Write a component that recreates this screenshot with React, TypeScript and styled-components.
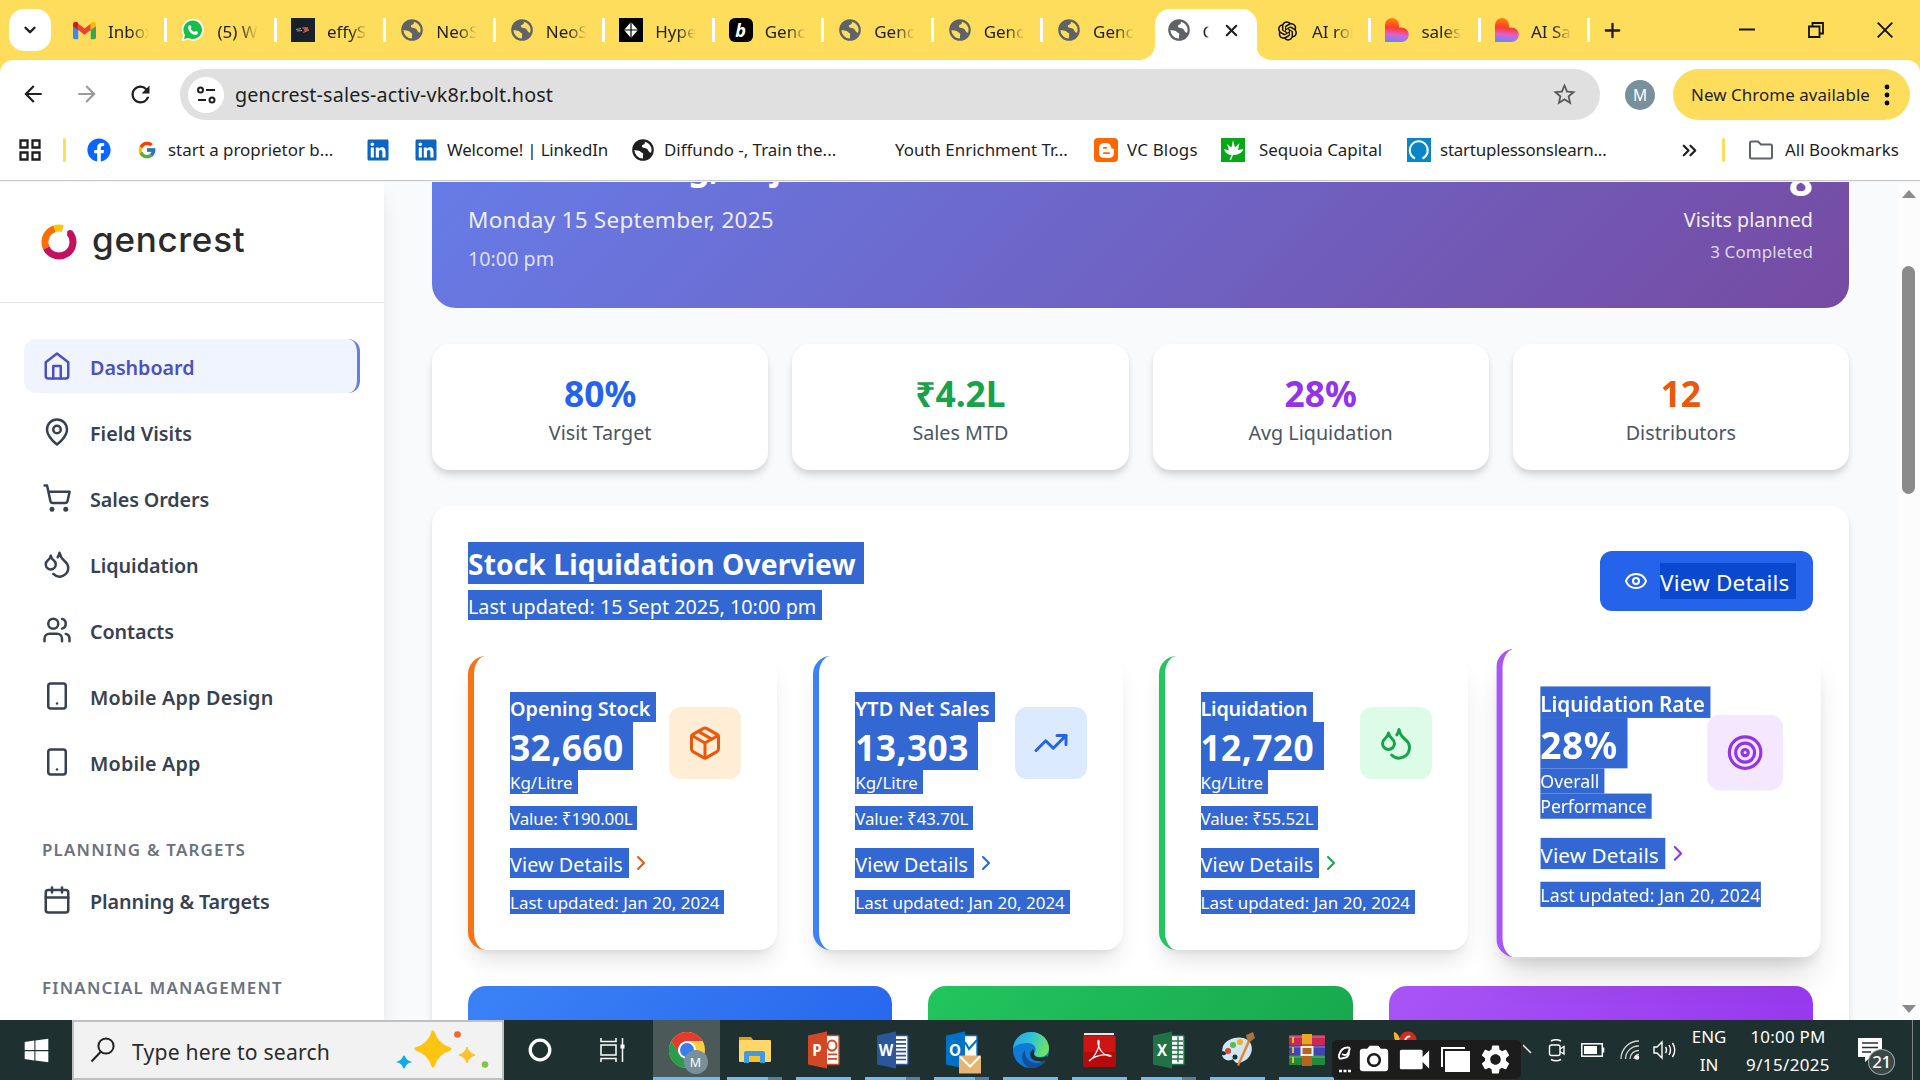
import React from "react";
import styled, { createGlobalStyle, css } from "styled-components";
import {
  Calendar, ChevronDown, ChevronRight, ChevronsRight, Droplets, Eye, Package,
  ShoppingCart, Smartphone, Target, TrendingUp, Users, Plus, X,
} from "lucide-react";
import { FaBloggerB, FaFacebook, FaLinkedin, FaWindows } from "react-icons/fa";
import { FcGoogle } from "react-icons/fc";
import { AiOutlineOpenAI } from "react-icons/ai";
import { MdArrowBack, MdArrowForward, MdPhotoCamera, MdRefresh, MdSettings, MdStarBorder, MdVideocam } from "react-icons/md";

const GlobalStyle = createGlobalStyle`
  * { box-sizing: border-box; }
  body { margin: 0; background: #fff; overflow: hidden; }
  svg { display: block; flex: none; }
`;

const FONT = `"Noto Sans", "Open Sans", sans-serif`;
const YELLOW = "#ffdd5c";

const Screen = styled.div`
  width: 1920px;
  height: 1080px;
  display: flex;
  flex-direction: column;
  overflow: hidden;
  font-family: ${FONT};
  color: #1f1f1f;
`;

/* ---------- Text ---------- */

type TextProps = { $s: number; $lh: number; $w?: number; $c?: string; $ls?: number; $hl?: string; $gap?: number; $drop?: number };

const Text = styled.div<TextProps>`
  width: fit-content;
  height: ${(p) => p.$lh}px;
  line-height: ${(p) => p.$lh + (p.$drop ?? (p.$s >= 21 && p.$s <= 24 ? 2 : p.$s * 0.05)) * 2}px;
  font-size: ${(p) => p.$s * 0.94}px;
  font-weight: ${(p) => p.$w ?? 400};
  letter-spacing: ${(p) => p.$ls ?? 0}px;
  color: ${(p) => p.$c ?? "inherit"};
  white-space: nowrap;
  ${(p) =>
    p.$hl &&
    css`
      background: ${p.$hl};
      color: #fff;
      padding-right: ${p.$gap ?? p.$s * 0.274}px;
    `}
`;

/* ---------- Tab strip ---------- */

const TabStrip = styled.div`
  height: 60px;
  flex: none;
  display: flex;
  align-items: center;
  background: ${YELLOW};
`;

const TabSearch = styled.div`
  width: 42px;
  height: 42px;
  margin: 0 4px 0 9px;
  border-radius: 15px;
  background: #fff;
  display: flex;
  align-items: center;
  justify-content: center;
`;

const TabBox = styled.div<{ $active?: boolean; $line?: boolean }>`
  position: relative;
  width: 109.46px;
  height: 60px;
  flex: none;
  display: flex;
  align-items: center;
  padding-left: 17px;
  ${(p) =>
    p.$line &&
    css`
      &::after {
        content: "";
        position: absolute;
        right: -3px;
        top: 18px;
        width: 3px;
        height: 24px;
        background: #fff;
      }
    `}
  ${(p) =>
    p.$active &&
    css`
      &::before {
        content: "";
        position: absolute;
        left: 5px;
        top: 9px;
        width: 102px;
        height: 51px;
        background: #fff;
        border-radius: 15px 15px 0 0;
      }
    `}
`;

const Flare = styled.span<{ $side: "left" | "right" }>`
  position: absolute;
  bottom: 0;
  ${(p) => (p.$side === "left" ? "left: -10px;" : "right: -12px;")}
  width: 15px;
  height: 15px;
  background: radial-gradient(circle at ${(p) => (p.$side === "left" ? "0 0" : "100% 0")}, transparent 14.5px, #fff 15px);
`;

const TabIcon = styled.span`
  position: relative;
  width: 24px;
  height: 24px;
  display: flex;
  align-items: center;
  justify-content: center;
`;

const TabTitle = styled.span<{ $w?: number }>`
  position: relative;
  top: 2px;
  width: ${(p) => p.$w ?? 41}px;
  margin-left: 12px;
  overflow: hidden;
  white-space: nowrap;
  font-size: 17px;
  line-height: 26px;
  mask-image: linear-gradient(90deg, #000 55%, transparent 100%);
`;

const TabClose = styled.span`
  position: relative;
  margin-left: 13px;
`;

const WindowButtons = styled.div`
  display: flex;
  align-items: center;
  gap: 53px;
  margin-left: auto;
  padding-right: 27px;
`;

const NewTab = styled.div`
  margin-left: 14px;
`;

const Favicon = styled.span<{ $bg: string; $r?: number }>`
  width: 24px;
  height: 24px;
  border-radius: ${(p) => p.$r ?? 0}px;
  background: ${(p) => p.$bg};
  display: flex;
  align-items: center;
  justify-content: center;
  color: #fff;
  font-size: 18px;
  line-height: 1;
`;

const BoldItalic = styled.b`
  font-style: italic;
  font-size: 18px;
  line-height: 22px;
`;

const Globe = ({ color = "#5f6368", size = 22 }: { color?: string; size?: number }) => (
  <svg width={size} height={size} viewBox="0 0 22 22">
    <circle cx="11" cy="11" r="9.7" fill="none" stroke={color} strokeWidth="2.2" />
    <path d="M2 11C1.500 5 6 1.500 12.500 1.700 L13 4 Q12.500 5.500 10.500 6 Q9.500 6.500 10 8 Q11 9 13 9 Q16 9.300 16.500 12 Q17 13.500 19.500 14 L17 18 Q14 20.500 11 20 L11 16.500 Q12 14.500 9.500 13.500 Q8 11.500 5.500 11.500 Z" fill={color} />
  </svg>
);

const Gmail = () => (
  <svg width="23" height="19" viewBox="0 0 24 19">
    <path d="M0 3 V17 Q0 18.500 1.600 18.500 H5.500 V8 Z" fill="#4285f4" />
    <path d="M24 3 V17 Q24 18.500 22.400 18.500 H18.500 V8 Z" fill="#34a853" />
    <path d="M5.500 2.500 L12 7.500 L18.500 2.500 V9 L12 14 L5.500 9 Z" fill="#ea4335" />
    <path d="M0 3 C0 0.200 3 -0.700 5.500 1.500 V9 L0 5 Z" fill="#c5221f" />
    <path d="M24 3 C24 0.200 21 -0.700 18.500 1.500 V9 L24 5 Z" fill="#fbbc04" />
  </svg>
);

const Heart = ({ id }: { id: string }) => (
  <svg width="24" height="24" viewBox="0 0 24 24">
    <defs>
      <linearGradient id={id} x1="0.5" y1="0" x2="0.4" y2="1">
        <stop offset="0" stopColor="#ff8a00" />
        <stop offset="0.42" stopColor="#ff3d2e" />
        <stop offset="0.7" stopColor="#e060d0" />
        <stop offset="1" stopColor="#5b8cff" />
      </linearGradient>
    </defs>
    <path d="M0 7 A7 7 0 0 1 14 7 V9.500 H16.500 A7.200 7.200 0 0 1 16.500 24 H0 Z" fill={`url(#${id})`} />
  </svg>
);

const Effy = () => (
  <svg width="24" height="24" viewBox="0 0 24 24">
    <rect width="24" height="24" fill="#17202b" />
    <path d="M5 11.500 L10 10.500 M6 13 L11 12.500" stroke="#a89b95" strokeWidth="1.200" />
    <path d="M11.500 10 H17 L13 12 H18 L12 14.500" stroke="#c9603a" strokeWidth="1.300" fill="none" />
  </svg>
);

const Hyper = () => (
  <svg width="24" height="24" viewBox="0 0 24 24">
    <rect width="24" height="24" fill="#000" />
    <path d="M12 4 L19 12 L12 20 L5 12 Z" fill="#fff" />
    <path d="M5 12 H19 M12 4 V20" stroke="#000" strokeWidth="1.200" />
  </svg>
);

const WhatsApp = () => (
  <svg width="24" height="24" viewBox="0 0 24 24">
    <path d="M1 23 L2.500 17.500 A11 11 0 1 1 7 21.600 Z" fill="#fff" />
    <path d="M3 21 L4 17 A9.300 9.300 0 1 1 7.300 20 Z" fill="#12c04b" />
    <path d="M8 7.200 Q9 6.500 9.700 7.500 L10.500 9.300 L9.700 10.700 Q11 13 13.600 14 L14.800 12.900 L17 14 Q17 16.800 14.300 17 Q8.500 16 7 10 Q7 8.200 8 7.200Z" fill="#fff" />
  </svg>
);

type TabDef = { title: string; icon: React.ReactNode };
const tabs: TabDef[] = [
  { title: "Inbox", icon: <Gmail /> },
  { title: "(5) W", icon: <WhatsApp /> },
  { title: "effyS", icon: <Effy /> },
  { title: "NeoS", icon: <Globe /> },
  { title: "NeoS", icon: <Globe /> },
  { title: "Hype", icon: <Hyper /> },
  { title: "Genc", icon: <Favicon $bg="#000" $r={6}><BoldItalic>b</BoldItalic></Favicon> },
  { title: "Genc", icon: <Globe /> },
  { title: "Genc", icon: <Globe /> },
  { title: "Genc", icon: <Globe /> },
];
const tabsAfter: TabDef[] = [
  { title: "AI rol", icon: <AiOutlineOpenAI size={25} color="#111" /> },
  { title: "sales", icon: <Heart id="heart-a" /> },
  { title: "AI Sa", icon: <Heart id="heart-b" /> },
];

/* ---------- Toolbar ---------- */

const ToolbarWrap = styled.div`
  flex: none;
  background: ${YELLOW};
`;

const Toolbar = styled.div`
  height: 69px;
  display: flex;
  align-items: center;
  background: #fff;
  border-radius: 13px 13px 0 0;
  padding-left: 20px;
`;

const NavButtons = styled.div`
  width: 160px;
  display: flex;
  gap: 27.5px;
`;

const UrlBar = styled.div`
  width: 1420px;
  height: 51px;
  border-radius: 26px;
  background: #e0e0e0;
  display: flex;
  align-items: center;
  padding: 0 22px 0 8px;
  justify-content: space-between;
`;

const UrlLeft = styled.div`
  display: flex;
  align-items: center;
  gap: 11px;
`;

const SiteInfo = styled.span`
  width: 36px;
  height: 36px;
  border-radius: 50%;
  background: #fff;
  display: flex;
  align-items: center;
  justify-content: center;
`;

const Avatar = styled.div<{ $size: number }>`
  width: ${(p) => p.$size}px;
  height: ${(p) => p.$size}px;
  border-radius: 50%;
  background: #78909c;
  color: #fff;
  font-size: ${(p) => p.$size * 0.52}px;
  display: flex;
  align-items: center;
  justify-content: center;
`;

const Profile = styled.div`
  margin-left: 25px;
`;

const UpdateChip = styled.div`
  width: 237px;
  height: 51px;
  margin-left: 18px;
  padding-left: 18px;
  border-radius: 26px;
  background: ${YELLOW};
  display: flex;
  align-items: center;
  gap: 14px;
`;

/* ---------- Bookmarks ---------- */

const Bookmarks = styled.div`
  height: 51px;
  display: flex;
  align-items: center;
  background: #fff;
  padding: 0 0 9px 19px;
`;

const Bookmark = styled.div<{ $w: number; $gap?: number; $ls?: number }>`
  width: ${(p) => p.$w}px;
  flex: none;
  display: flex;
  align-items: center;
  gap: ${(p) => p.$gap ?? 10}px;
  font-size: 16.92px;
  line-height: 24px;
  letter-spacing: ${(p) => p.$ls ?? 0}px;
  white-space: nowrap;
`;

const BarDivider = styled.span<{ $mr: number }>`
  width: 3px;
  height: 24px;
  border-radius: 2px;
  background: ${YELLOW};
  margin-right: ${(p) => p.$mr}px;
`;

const ChromeEdge = styled.div`
  height: 2px;
  flex: none;
  border-top: 1px solid #c8c8c8;
  background: #f3f4f7;
`;

/* ---------- Page ---------- */

const Page = styled.div`
  height: 838px;
  flex: none;
  display: flex;
  overflow: hidden;
  background: #f9fafc;
`;

const Sidebar = styled.aside`
  width: 384px;
  flex: none;
  background: #fff;
  box-shadow: 0 15px 23px -4px rgba(0, 0, 0, 0.1), 0 6px 9px -3px rgba(0, 0, 0, 0.06);
`;

const Brand = styled.div`
  height: 121px;
  padding-left: 41px;
  display: flex;
  align-items: center;
  gap: 15px;
  border-bottom: 1px solid #e5e7eb;
`;

const BrandName = styled.span`
  font-family: Inter, sans-serif;
  font-weight: 500;
  font-size: 35px;
  letter-spacing: 0.7px;
  line-height: 40px;
  padding-bottom: 7px;
  color: #2b2b2b;
`;

const Nav = styled.nav`
  padding: 36px 24px 0;
`;

const NavItem = styled.div<{ $active?: boolean }>`
  height: 54px;
  margin-bottom: 12px;
  padding: 0 0 0 18px;
  display: flex;
  align-items: center;
  gap: 18px;
  border-radius: 12px;
  color: ${(p) => (p.$active ? "#4c51bf" : "#374151")};
  ${(p) => p.$active && "background: #f0f4ff; border-right: 3px solid #667eea;"}
`;

const NavHeading = styled.div`
  margin: 48px 0 12px 18px;
`;

const Main = styled.main`
  width: 1513px;
  flex: none;
  padding: 0 48px;
`;

/* Scroll offset of the content column inside the viewport. */
const Scrolled = styled.div`
  margin-top: -78px;
  display: flex;
  flex-direction: column;
  gap: 36px;
`;

const Hero = styled.section`
  height: 204px;
  padding: 36px;
  border-radius: 24px;
  display: flex;
  justify-content: space-between;
  background: linear-gradient(135deg, #667eea 0%, #764ba2 100%);
  color: #fff;
`;

const HeroCol = styled.div<{ $right?: boolean }>`
  display: flex;
  flex-direction: column;
  justify-content: ${(p) => (p.$right ? "center" : "flex-start")};
  align-items: ${(p) => (p.$right ? "flex-end" : "flex-start")};
`;

const Gap = styled.div<{ $h: number }>`
  height: ${(p) => p.$h}px;
`;

const Stats = styled.section`
  display: grid;
  grid-template-columns: repeat(4, 1fr);
  gap: 24px;
`;

const Stat = styled.div`
  height: 126px;
  padding: 24px;
  border-radius: 18px;
  background: #fff;
  box-shadow: 0 6px 9px -1.5px rgba(0, 0, 0, 0.12), 0 3px 6px -1.5px rgba(0, 0, 0, 0.07);
  display: flex;
  flex-direction: column;
  align-items: center;
`;

const Panel = styled.section`
  border-radius: 18px;
  background: #fff;
  padding: 36px;
  box-shadow: 0 6px 9px -1.5px rgba(0, 0, 0, 0.1), 0 3px 6px -1.5px rgba(0, 0, 0, 0.06);
`;

const PanelHead = styled.div`
  height: 78px;
  display: flex;
  align-items: center;
  justify-content: space-between;
  margin-bottom: 36px;
`;

const DetailsButton = styled.div`
  width: 213px;
  height: 60px;
  border-radius: 12px;
  background: #2563eb;
  padding-left: 24px;
  display: flex;
  align-items: center;
  gap: 12px;
  color: #fff;
`;

const Cards = styled.div`
  display: grid;
  grid-template-columns: repeat(4, 1fr);
  gap: 36px;
  margin-bottom: 36px;
`;

const Card = styled.article<{ $edge: string; $raised?: boolean }>`
  height: 294px;
  padding: 36px;
  border-left: 6px solid ${(p) => p.$edge};
  border-radius: 18px;
  background: #fff;
  box-shadow: ${(p) =>
    p.$raised
      ? "0 22px 32px -8px rgba(0,0,0,0.15), 0 9px 14px -6px rgba(0,0,0,0.12)"
      : "0 15px 22px -4px rgba(0,0,0,0.1), 0 6px 9px -6px rgba(0,0,0,0.12)"};
  ${(p) => p.$raised && "transform: scale(1.05);"}
`;

const CardTop = styled.div`
  display: flex;
  align-items: center;
  justify-content: space-between;
`;

const CardFigures = styled.div`
  width: 150px;
`;

const Tile = styled.div<{ $bg: string; $c: string }>`
  width: 72px;
  height: 72px;
  flex: none;
  border-radius: 12px;
  background: ${(p) => p.$bg};
  color: ${(p) => p.$c};
  display: flex;
  align-items: center;
  justify-content: center;
`;

const LinkRow = styled.div<{ $c: string }>`
  margin: 18px 0 12px;
  display: flex;
  align-items: center;
  color: ${(p) => p.$c};
`;

const Banners = styled.div`
  display: grid;
  grid-template-columns: repeat(3, 1fr);
  gap: 36px;
`;

const Banner = styled.div<{ $from: string; $to: string }>`
  height: 120px;
  border-radius: 18px;
  background: linear-gradient(135deg, ${(p) => p.$from}, ${(p) => p.$to});
`;

const Scrollbar = styled.div`
  width: 23px;
  flex: none;
  background: #fcfcfc;
  display: flex;
  flex-direction: column;
  align-items: center;
  padding: 8px 0 7px;
`;

const Arrow = styled.span<{ $up?: boolean }>`
  border: 7px solid transparent;
  ${(p) => (p.$up ? "border-top: 0; border-bottom: 8px solid #8b8b8b;" : "border-bottom: 0; border-top: 8px solid #8b8b8b; margin-top: auto;")}
`;

const Thumb = styled.span`
  width: 13px;
  height: 228px;
  margin-top: 68px;
  border-radius: 7px;
  background: #8b8b8b;
`;

const HomeIcon = () => (
  <svg width="30" height="30" viewBox="0 0 24 24" fill="none" stroke="currentColor" strokeWidth="2" strokeLinecap="round" strokeLinejoin="round">
    <path d="m3 9 9-7 9 7v11a2 2 0 0 1-2 2H5a2 2 0 0 1-2-2z" />
    <polyline points="9 22 9 12 15 12 15 22" />
  </svg>
);

const PinIcon = () => (
  <svg width="30" height="30" viewBox="0 0 24 24" fill="none" stroke="currentColor" strokeWidth="2" strokeLinecap="round" strokeLinejoin="round">
    <path d="M20 10c0 6-8 12-8 12s-8-6-8-12a8 8 0 0 1 16 0Z" />
    <circle cx="12" cy="10" r="3" />
  </svg>
);

const Ring = () => (
  <svg width="36" height="36" viewBox="-18 -18 36 36" fill="none" strokeWidth="7">
    <path d="M-12.700 5.900 A14 14 0 0 1 -4.400 -13.300" stroke="#ff6d00" />
    <path d="M-4.400 -13.300 A14 14 0 0 1 3.800 -13.500" stroke="#ffc400" />
    <path d="M10.300 -9.500 A14 14 0 1 1 -12.700 5.900" stroke="#c4105f" />
    <circle cx="10.900" cy="-9.300" r="2.800" fill="#c4105f" />
  </svg>
);

const HL = "#3367d1";

const navItems = [
  { label: "Dashboard", icon: <HomeIcon />, ls: -0.05 },
  { label: "Field Visits", icon: <PinIcon />, ls: 0 },
  { label: "Sales Orders", icon: <ShoppingCart size={30} />, ls: -0.1 },
  { label: "Liquidation", icon: <Droplets size={30} />, ls: -0.05 },
  { label: "Contacts", icon: <Users size={30} />, ls: -0.1 },
  { label: "Mobile App Design", icon: <Smartphone size={30} />, ls: 0.2 },
  { label: "Mobile App", icon: <Smartphone size={30} />, ls: 0.2 },
];

const stats = [
  { value: "80%", label: "Visit Target", color: "#2563eb" },
  { value: "₹4.2L", label: "Sales MTD", color: "#16a34a" },
  { value: "28%", label: "Avg Liquidation", color: "#9333ea" },
  { value: "12", label: "Distributors", color: "#ea580c" },
];

const cards = [
  { title: "Opening Stock", value: "32,660", money: "Value: ₹190.00L", edge: "#f97316", bg: "#ffedd5", c: "#ea580c", icon: <Package size={36} /> },
  { title: "YTD Net Sales", value: "13,303", money: "Value: ₹43.70L", edge: "#3b82f6", bg: "#dbeafe", c: "#2563eb", icon: <TrendingUp size={36} />, ls: 0.16 },
  { title: "Liquidation", value: "12,720", money: "Value: ₹55.52L", edge: "#22c55e", bg: "#dcfce7", c: "#16a34a", icon: <Droplets size={36} />, ls: -0.2 },
  { title: "Liquidation Rate", value: "28%", edge: "#a855f7", bg: "#f3e8ff", c: "#9333ea", icon: <Target size={36} />, ls: -0.1 },
];

/* ---------- Taskbar ---------- */

const Taskbar = styled.footer`
  position: relative;
  height: 60px;
  flex: none;
  display: flex;
  background: #1e3130;
  color: #fff;
`;

const Slot = styled.div<{ $w: number }>`
  width: ${(p) => p.$w}px;
  height: 60px;
  flex: none;
  display: flex;
  align-items: center;
  justify-content: center;
`;

const Search = styled.div`
  width: 432px;
  height: 60px;
  border: 2px solid #c0c0c0;
  background: #f2f2f2;
  display: flex;
  align-items: center;
  gap: 16px;
  padding-left: 16px;
  color: #2b2b2b;
`;

const SearchArt = styled.div`
  margin-left: auto;
  padding-right: 12px;
`;

const TaskApp = styled.div<{ $active?: boolean; $multi?: boolean }>`
  width: ${(p) => (p.$active ? 67 : 69)}px;
  margin-left: ${(p) => (p.$active ? 5 : 0)}px;
  height: 60px;
  flex: none;
  display: flex;
  flex-direction: column;
  align-items: center;
  justify-content: space-between;
  background: ${(p) => (p.$active ? "#4b5a59" : "transparent")};
  padding-top: 7px;
  &::after {
    content: "";
    width: ${(p) => (p.$active ? 67 : 55)}px;
    height: 3px;
    background: ${(p) => (p.$multi ? "linear-gradient(90deg, #76b9ed 41px, #55819f 41px)" : "#76b9ed")};
  }
`;

const AppIcon = styled.div`
  position: relative;
  height: 46px;
  display: flex;
  align-items: center;
  justify-content: center;
`;

const AppBadge = styled.div`
  position: absolute;
  right: -3px;
  bottom: -1px;
`;

const OfficeText = styled.text`
  font-family: "Open Sans", sans-serif;
  font-weight: 700;
  fill: #fff;
`;

const Office = ({ letter, color, children }: { letter: string; color: string; children: React.ReactNode }) => (
  <svg width="32" height="38" viewBox="0 0 32 34" preserveAspectRatio="none">
    <rect x="14" y="4" width="17" height="26" rx="1" fill="#fff" stroke={color} strokeWidth="1.400" />
    {children}
    <path d="M0 4 L19 0.500 V33.500 L0 30 Z" fill={color} />
    <OfficeText x="9" y="22.500" fontSize="15" textAnchor="middle">{letter}</OfficeText>
  </svg>
);

const ChromeIcon = () => (
  <svg width="36" height="36" viewBox="-18 -18 36 36">
    <circle r="18" fill="#ffcd40" />
    <path d="M-15.600 -9 A18 18 0 0 1 15.600 -9 L0 -9 L-7.800 4.500 Z" fill="#e33b2e" />
    <path d="M-15.600 -9 A18 18 0 0 0 0 18 L7.800 4.500 L-7.800 4.500 Z" fill="#2a9d4b" />
    <circle r="9" fill="#fff" />
    <circle r="7" fill="#3b7ded" />
  </svg>
);

const ExplorerIcon = () => (
  <svg width="32" height="28" viewBox="0 0 32 28">
    <path d="M0 1 H12 L15 5 H0 Z" fill="#e0a100" />
    <rect y="4" width="32" height="22" rx="1" fill="#ffd768" />
    <path d="M5 27 V17 Q5 15 7 15 H24 Q26 15 26 17 V27 H21 V20 H10 V27 Z" fill="#3f9be0" />
    <rect x="10" y="20" width="11" height="6" fill="#fbbf2d" />
  </svg>
);

const EdgeIcon = () => (
  <svg width="36" height="36" viewBox="0 0 36 36">
    <defs>
      <linearGradient id="edge-top" x1="0" y1="0.2" x2="1" y2="0.5">
        <stop offset="0" stopColor="#2aa3e8" />
        <stop offset="0.5" stopColor="#31c4d6" />
        <stop offset="1" stopColor="#6ee35a" />
      </linearGradient>
    </defs>
    <circle cx="18" cy="18" r="18" fill="#0f7bd6" />
    <path d="M0 17 C1 6 9 0 18 0 C29 0 36 8 36 16 C36 22 32 25 27 25 C22 25 20 23 22 20 C24 16 21 11 15 11 C8 11 2 13 0 17 Z" fill="url(#edge-top)" />
    <path d="M12 18 C11 26 17 31 24 31 C28 31 31 30 33 28 C30 33 25 36 18 36 C10 35 6 24 12 18 Z" fill="#144f9f" />
    <path d="M20 17 C22 20 20 22 22 24 C25 27 32 25 34 24 C36 26 34 27 33 28 C29 31 27 29 24 29 C17 28 15 22 20 17Z" fill="#1e3130" />
  </svg>
);

const AdobeIcon = () => (
  <svg width="33" height="34" viewBox="0 0 33 34">
    <rect x="1" y="0" width="30" height="6" fill="#e8e8e8" />
    <rect x="0" y="2" width="33" height="32" rx="2" fill="#b60b0b" />
    <rect x="1" y="3" width="31" height="16" rx="2" fill="#cf1414" />
    <path d="M6 28 C12 24 17 14 16 8 C15 6 14 9 16 14 C18 20 24 24 28 23 C25 20 12 22 6 28 Z" fill="none" stroke="#fff" strokeWidth="1.200" />
  </svg>
);

const PaintIcon = () => (
  <svg width="36" height="36" viewBox="0 0 36 36">
    <path d="M3 14 C8 5 22 3 29 9 C35 16 31 27 22 30 C16 33 14 29 13 27 C9 30 3 28 2 23 C8 24 7 19 2 19 Z" fill="#cfe6f5" />
    <circle cx="8" cy="19" r="3" fill="#e0433a" />
    <circle cx="13" cy="13" r="3" fill="#61b945" />
    <circle cx="20" cy="10" r="3" fill="#f0b323" />
    <circle cx="15" cy="25" r="2.500" fill="#1e3130" />
    <path d="M28 8 L30 10 L19 34 L17 33 Z" fill="#e8842c" />
    <path d="M26 3 L33 0 L35 6 L30 10 L27 8 Z" fill="#a9713e" />
  </svg>
);

const WinrarIcon = () => (
  <svg width="36" height="32" viewBox="0 0 36 32">
    <rect y="1" width="36" height="10" rx="1" fill="#c92a55" />
    <rect y="11" width="36" height="10" rx="1" fill="#3f45b5" />
    <rect y="21" width="36" height="10" rx="1" fill="#1d8a3c" />
    <path d="M0 3 H36 M0 13 H36 M0 23 H36" stroke="#fff" strokeOpacity="0.35" />
    <path d="M4 3 V9 M4 13 V19 M4 23 V29" stroke="#e7c21c" strokeWidth="2" />
    <rect x="13" y="0" width="10" height="32" fill="#b8631e" />
    <rect x="13" y="0" width="10" height="10" fill="#e8a622" />
    <rect x="12.500" y="13" width="11" height="8" fill="none" stroke="#eee" strokeWidth="2" />
  </svg>
);

const star = (x: number, y: number, rx: number, ry: number) =>
  `M${x} ${y - ry} Q${x + rx * 0.2} ${y - ry * 0.25} ${x + rx} ${y} Q${x + rx * 0.2} ${y + ry * 0.25} ${x} ${y + ry} Q${x - rx * 0.2} ${y + ry * 0.25} ${x - rx} ${y} Q${x - rx * 0.2} ${y - ry * 0.25} ${x} ${y - ry} Z`;

const Recorder = styled.div`
  position: absolute;
  left: 1332px;
  top: 20px;
  width: 189px;
  height: 39px;
  border-radius: 5px;
  background: #1c1c1c;
  display: flex;
  align-items: center;
  padding-left: 5px;
`;

const Peek = styled.div`
  position: absolute;
  left: 1393px;
  top: 11px;
`;

const Tray = styled.div`
  margin-left: auto;
  display: flex;
  align-items: center;
`;

const TrayText = styled.div<{ $w: number }>`
  width: ${(p) => p.$w}px;
  display: flex;
  flex-direction: column;
  align-items: center;
  gap: 2px;
`;

const Notice = styled.div`
  position: relative;
  width: 70px;
  height: 60px;
  padding: 18px 0 0 23px;
`;

const Count = styled.span`
  position: absolute;
  left: 33px;
  top: 29px;
  width: 27px;
  height: 26px;
  border-radius: 50%;
  border: 1px solid #a0a6a6;
  background: #3c4747;
  font-size: 17px;
  font-weight: 500;
  letter-spacing: -0.5px;
  line-height: 24px;
  text-align: center;
`;

const DesktopEdge = styled.div`
  width: 8px;
  height: 60px;
  margin-left: 7px;
  border-left: 1px solid #7c8786;
`;

function TabView({ tab, line }: { tab: TabDef; line: boolean }) {
  return (
    <TabBox $line={line}>
      <TabIcon>{tab.icon}</TabIcon>
      <TabTitle>{tab.title}</TabTitle>
    </TabBox>
  );
}

export default function App() {
  return (
    <Screen>
      <GlobalStyle />
      <TabStrip>
        <TabSearch><ChevronDown size={18} strokeWidth={3.2} /></TabSearch>
        {tabs.map((t, i) => <TabView key={i} tab={t} line={i < tabs.length - 1} />)}
        <TabBox $active>
          <Flare $side="left" />
          <Flare $side="right" />
          <TabIcon><Globe /></TabIcon>
          <TabTitle $w={6}>G</TabTitle>
          <TabClose><X size={19} strokeWidth={2.6} /></TabClose>
        </TabBox>
        {tabsAfter.map((t, i) => <TabView key={i} tab={t} line />)}
        <NewTab><Plus size={23} strokeWidth={2.4} /></NewTab>
        <WindowButtons>
          <svg width="16" height="16" viewBox="0 0 16 16"><path d="M0 7.500 H16" stroke="#111" strokeWidth="2" /></svg>
          <svg width="16" height="16" viewBox="0 0 16 16" fill="none" stroke="#111" strokeWidth="1.800"><path d="M1 4.500 H11.500 V15 H1 Z M4.500 4.500 V1 H15 V11.500 H11.500" /></svg>
          <svg width="16" height="16" viewBox="0 0 16 16" stroke="#111" strokeWidth="1.900"><path d="M0.700 0.700 L15.300 15.300 M15.300 0.700 L0.700 15.300" /></svg>
        </WindowButtons>
      </TabStrip>

      <ToolbarWrap>
        <Toolbar>
          <NavButtons>
            <MdArrowBack size={26} />
            <MdArrowForward size={26} color="#9b9b9b" />
            <MdRefresh size={27} />
          </NavButtons>
          <UrlBar>
            <UrlLeft>
              <SiteInfo>
                <svg width="19" height="18" viewBox="0 0 19 18" fill="none" stroke="#1f1f1f" strokeWidth="2">
                  <circle cx="3.500" cy="4" r="2.500" /><path d="M9 4 H18 M1 14 H9" /><circle cx="15" cy="14" r="2.500" />
                </svg>
              </SiteInfo>
              <Text $s={21} $lh={30} $ls={0.15} $drop={-0.5}>gencrest-sales-activ-vk8r.bolt.host</Text>
            </UrlLeft>
            <MdStarBorder size={27} color="#5a5a5a" />
          </UrlBar>
          <Profile><Avatar $size={30}>M</Avatar></Profile>
          <UpdateChip>
            <Text $s={18} $lh={26} $ls={0.07} $drop={-0.5}>New Chrome available</Text>
            <svg width="6" height="22" viewBox="0 0 6 22"><circle cx="3" cy="3" r="2.400" /><circle cx="3" cy="11" r="2.400" /><circle cx="3" cy="19" r="2.400" /></svg>
          </UpdateChip>
        </Toolbar>
        <Bookmarks>
          <Bookmark $w={44}>
            <svg width="22" height="22" viewBox="0 0 22 22" fill="none" stroke="#1f1f1f" strokeWidth="2.300">
              <path d="M1.500 1.500 H8.500 V8.500 H1.500 Z M13.500 1.500 H20.500 V8.500 H13.500 Z M1.500 13.500 H8.500 V20.500 H1.500 Z M13.500 13.500 H20.500 V20.500 H13.500 Z" />
            </svg>
          </Bookmark>
          <BarDivider $mr={21} />
          <Bookmark $w={50}><FaFacebook size={24} color="#0866ff" /></Bookmark>
          <Bookmark $w={229} $gap={11}><FcGoogle size={20} />start a proprietor b...</Bookmark>
          <Bookmark $w={48}><FaLinkedin size={24} color="#0a66c2" /></Bookmark>
          <Bookmark $w={218} $gap={9} $ls={-0.18}><FaLinkedin size={24} color="#0a66c2" />Welcome! | LinkedIn</Bookmark>
          <Bookmark $w={263}><Globe color="#1f1f1f" />Diffundo -, Train the...</Bookmark>
          <Bookmark $w={199}>Youth Enrichment Tr...</Bookmark>
          <Bookmark $w={127} $gap={9} $ls={0.2}><Favicon $bg="#ff6600" $r={4}><FaBloggerB size={17} /></Favicon>VC Blogs</Bookmark>
          <Bookmark $w={186} $gap={14}>
            <svg width="24" height="24" viewBox="0 0 24 24"><rect width="24" height="24" fill="#06a817" /><path d="M8.500 22 L10.500 17 C7 17 4 14.500 3 11 L8 12.500 L6 6 L10.500 9.500 L12 2 L14 9.500 L18.500 5 L17 12 L22.500 11 C21 15 16.500 17 12 17 L10 22 Z" fill="#fff" /></svg>
            Sequoia Capital
          </Bookmark>
          <Bookmark $w={271} $gap={9} $ls={-0.2}>
            <svg width="24" height="24" viewBox="0 0 24 24"><rect width="24" height="24" fill="#0a86c6" /><path d="M8 20.500 A9 9 0 1 1 15.500 20.500" fill="none" stroke="#fff" strokeWidth="2" /></svg>
            startuplessonslearn...
          </Bookmark>
          <Bookmark $w={44}><ChevronsRight size={23} strokeWidth={2.3} /></Bookmark>
          <BarDivider $mr={24} />
          <Bookmark $w={160} $gap={12}>
            <svg width="24" height="20" viewBox="0 0 24 20" fill="none" stroke="#5f6368" strokeWidth="2"><path d="M1 3 Q1 1.500 2.500 1.500 H9 L12 4.500 H21.500 Q23 4.500 23 6 V17 Q23 18.500 21.500 18.500 H2.500 Q1 18.500 1 17 Z" /></svg>
            All Bookmarks
          </Bookmark>
        </Bookmarks>
      </ToolbarWrap>
      <ChromeEdge />

      <Page>
        <Sidebar>
          <Brand><Ring /><BrandName>gencrest</BrandName></Brand>
          <Nav>
            {navItems.map((n, i) => (
              <NavItem key={n.label} $active={i === 0}>
                {n.icon}
                <Text $s={21} $lh={30} $w={600} $ls={n.ls}>{n.label}</Text>
              </NavItem>
            ))}
            <NavHeading><Text $s={18} $lh={24} $w={600} $ls={1.2} $c="#6b7280">PLANNING &amp; TARGETS</Text></NavHeading>
            <NavItem><Calendar size={30} /><Text $s={21} $lh={30} $w={600} $ls={-0.08}>Planning &amp; Targets</Text></NavItem>
            <NavHeading><Text $s={18} $lh={24} $w={600} $ls={1.2} $c="#6b7280">FINANCIAL MANAGEMENT</Text></NavHeading>
          </Nav>
        </Sidebar>

        <Main>
          <Scrolled>
            <Hero>
              <HeroCol>
                <Text $s={36} $lh={48} $w={700} $ls={0.1} $drop={3.5}>Good Morning, Raj</Text>
                <Gap $h={12} />
                <Text $s={24} $lh={36} $ls={0.23} $c="rgba(255,255,255,0.9)">Monday 15 September, 2025</Text>
                <Gap $h={6} />
                <Text $s={21} $lh={30} $c="rgba(255,255,255,0.78)">10:00 pm</Text>
              </HeroCol>
              <HeroCol $right>
                <Text $s={45} $lh={54} $w={700} $drop={4}>8</Text>
                <Text $s={21} $lh={30} $c="rgba(255,255,255,0.92)">Visits planned</Text>
                <Gap $h={6} />
                <Text $s={18} $lh={24} $ls={0.15} $c="rgba(255,255,255,0.78)">3 Completed</Text>
              </HeroCol>
            </Hero>

            <Stats>
              {stats.map((s) => (
                <Stat key={s.label}>
                  <Text $s={37.6} $lh={48} $w={700} $c={s.color}>{s.value}</Text>
                  <Text $s={21} $lh={30} $c="#4b5563">{s.label}</Text>
                </Stat>
              ))}
            </Stats>

            <Panel>
              <PanelHead>
                <div>
                  <Text $s={30} $lh={42} $w={700} $ls={0.11} $hl={HL}>Stock Liquidation Overview</Text>
                  <Gap $h={6} />
                  <Text $s={21} $lh={30} $ls={0.03} $hl={HL}>Last updated: 15 Sept 2025, 10:00 pm</Text>
                </div>
                <DetailsButton>
                  <Eye size={24} />
                  <Text $s={24} $lh={36} $ls={0.15} $hl="#0948cf">View Details</Text>
                </DetailsButton>
              </PanelHead>

              <Cards>
                {cards.map((c, i) => (
                  <Card key={c.title} $edge={c.edge} $raised={i === 3}>
                    <CardTop>
                      <CardFigures>
                        <Text $s={21} $lh={30} $w={600} $ls={c.ls} $hl={HL}>{c.title}</Text>
                        <Text $s={37.6} $lh={48} $w={700} $ls={0.4} $hl={HL} $gap={c.money ? 9.7 : 10}>{c.value}</Text>
                        {c.money ? (
                          <Text $s={18} $lh={24} $hl={HL}>Kg/Litre</Text>
                        ) : (
                          <>
                            <Text $s={18} $lh={24} $hl={HL}>Overall</Text>
                            <Text $s={18} $lh={24} $ls={-0.2} $hl={HL}>Performance</Text>
                          </>
                        )}
                      </CardFigures>
                      <Tile $bg={c.bg} $c={c.c}>{c.icon}</Tile>
                    </CardTop>
                    {c.money && (
                      <>
                        <Gap $h={12} />
                        <Text $s={18} $lh={24} $ls={-0.1} $hl={HL}>{c.money}</Text>
                      </>
                    )}
                    <LinkRow $c={c.c}>
                      <Text $s={21} $lh={30} $ls={0.1} $hl={HL}>View Details</Text>
                      <ChevronRight size={24} />
                    </LinkRow>
                    <Text $s={18} $lh={24} $ls={0.04} $hl={HL} $gap={c.money ? undefined : 0.1}>Last updated: Jan 20, 2024</Text>
                  </Card>
                ))}
              </Cards>

              <Banners>
                <Banner $from="#3b82f6" $to="#2563eb" />
                <Banner $from="#22c55e" $to="#16a34a" />
                <Banner $from="#a855f7" $to="#9333ea" />
              </Banners>
            </Panel>
          </Scrolled>
        </Main>

        <Scrollbar><Arrow $up /><Thumb /><Arrow /></Scrollbar>
      </Page>

      <Taskbar>
        <Slot $w={72}><FaWindows size={27} /></Slot>
        <Search>
          <svg width="26" height="26" viewBox="0 0 26 26" fill="none" stroke="#222" strokeWidth="2"><circle cx="16" cy="9" r="7.600" /><path d="M11 14.500 L1.500 24.500" /></svg>
          <Text $s={22.5} $lh={30} $ls={0.18}>Type here to search</Text>
          <SearchArt>
            <svg width="94" height="40" viewBox="0 0 94 40">
              <path d={star(37, 19, 17, 17)} fill="#fdc412" stroke="#fdc412" strokeWidth="3" strokeLinejoin="round" />
              <path d={star(71, 25, 8, 8)} fill="#fdc12e" stroke="#fdc12e" strokeLinejoin="round" />
              <path d={star(8, 32, 5.5, 6)} fill="#10a8ee" stroke="#10a8ee" strokeWidth="1.800" />
              <circle cx="61.500" cy="4.500" r="3.300" fill="#f2652b" />
              <circle cx="89" cy="34.500" r="3.300" fill="#85c441" />
            </svg>
          </SearchArt>
        </Search>
        <Slot $w={72}><svg width="24" height="24" viewBox="0 0 24 24"><circle cx="12" cy="12" r="9.800" fill="none" stroke="#fff" strokeWidth="3.300" /></svg></Slot>
        <Slot $w={72}>
          <svg width="26" height="26" viewBox="0 0 26 26" fill="none" stroke="#fff" strokeWidth="1.500"><path d="M2 1 V4.500 H17 V1 M2 8 H17 V18 H2 Z M2 25 V21.500 H17 V25 M23.500 1 V25" /><path d="M21.500 9.500 H25.500" strokeWidth="4" /></svg>
        </Slot>
        <TaskApp $active><AppIcon><ChromeIcon /><AppBadge><Avatar $size={24}>M</Avatar></AppBadge></AppIcon></TaskApp>
        <TaskApp $multi><AppIcon><ExplorerIcon /></AppIcon></TaskApp>
        <TaskApp><AppIcon>
          <Office letter="P" color="#d24726"><circle cx="24" cy="13" r="4.500" fill="none" stroke="#d24726" strokeWidth="2" /><path d="M20 21 H29 M20 25 H29" stroke="#d24726" strokeWidth="1.600" /></Office>
        </AppIcon></TaskApp>
        <TaskApp $multi><AppIcon>
          <Office letter="W" color="#2b579a"><path d="M19 8 H29 M19 11.500 H29 M19 15 H29 M19 18.500 H29 M19 22 H29 M19 25.500 H29" stroke="#2b579a" strokeWidth="1.500" /></Office>
        </AppIcon></TaskApp>
        <TaskApp $multi><AppIcon>
          <Office letter="O" color="#0072c6"><path d="M19 10 L23 16 L31 8" fill="none" stroke="#0072c6" strokeWidth="2" /></Office>
          <AppBadge><svg width="22" height="19" viewBox="0 0 22 18"><rect width="22" height="18" fill="#e8b473" /><path d="M1 1 L11 11 L21 1" fill="none" stroke="#fff" strokeWidth="2" /></svg></AppBadge>
        </AppIcon></TaskApp>
        <TaskApp><AppIcon><EdgeIcon /></AppIcon></TaskApp>
        <TaskApp><AppIcon><AdobeIcon /></AppIcon></TaskApp>
        <TaskApp $multi><AppIcon>
          <Office letter="X" color="#217346"><path d="M19 9 H30 M19 13 H30 M19 17 H30 M19 21 H30 M19 25 H30 M25 5 V28" stroke="#217346" strokeWidth="1.400" /></Office>
        </AppIcon></TaskApp>
        <TaskApp><AppIcon><PaintIcon /></AppIcon></TaskApp>
        <TaskApp><AppIcon><WinrarIcon /></AppIcon></TaskApp>
        <Peek><svg width="26" height="16" viewBox="0 0 26 16"><path d="M1 1 Q5 2 7 8 L5 14 Q0 8 1 1 Z" fill="#f5b52b" /><circle cx="15" cy="9" r="8.500" fill="#d8291f" /><path d="M12 9 Q15 4 17 6" stroke="#fff" strokeWidth="2" fill="none" /></svg></Peek>
        <Recorder>
          <svg width="16" height="28" viewBox="0 0 16 28" fill="none" stroke="#fff" strokeWidth="1.900"><path d="M6 12 Q1 14 2 9 Q4 2 10 1.500 Q14 1 12 5 Q10 11 5 8 M12 6 Q12 12 6 12" /><path d="M2 25 H14" strokeWidth="2.500" strokeDasharray="3 1.500" /></svg>
          <Slot $w={41}><MdPhotoCamera size={34} /></Slot>
          <Slot $w={41}><MdVideocam size={39} /></Slot>
          <Slot $w={40}><svg width="29" height="25" viewBox="0 0 29 25"><path d="M1 20 V1 H24" fill="none" stroke="#fff" strokeWidth="2" /><rect x="4" y="4" width="25" height="21" fill="#fff" /></svg></Slot>
          <Slot $w={40}><MdSettings size={35} /></Slot>
        </Recorder>
        <Tray>
          <Slot $w={14}><svg width="12" height="12" viewBox="0 0 12 12"><path d="M0 1 L8 9" stroke="#fff" strokeWidth="1.500" /></svg></Slot>
          <Slot $w={42}>
            <svg width="18" height="24" viewBox="0 0 18 24" fill="none" stroke="#fff" strokeWidth="1.400"><rect x="1.500" y="7" width="10.500" height="10.500" rx="2" /><path d="M12 11 L16 8.500 V16 L12 13.500 M3 3 Q8 0.500 13 3 M3 21.500 Q8 24 13 21.500" /></svg>
          </Slot>
          <Slot $w={29}><svg width="24" height="14" viewBox="0 0 24 14"><rect x="0.800" y="0.800" width="20.500" height="12.400" fill="none" stroke="#fff" strokeWidth="1.500" /><rect x="3" y="3" width="13" height="8" fill="#fff" /><path d="M22.500 4.500 V9.500" stroke="#fff" strokeWidth="1.600" /></svg></Slot>
          <Slot $w={45}><svg width="20" height="20" viewBox="0 0 20 20" fill="none" stroke="#fff" strokeWidth="1.300"><path d="M1 19 A18 18 0 0 1 19 1 M5.500 19 A13 13 0 0 1 19 6 M10 19 A8.500 8.500 0 0 1 19 10.500 M14 19 A5 5 0 0 1 19 14.500" opacity="0.800" /><circle cx="17" cy="17.500" r="1.600" fill="#fff" /></svg></Slot>
          <Slot $w={25}><svg width="24" height="20" viewBox="0 0 24 20" fill="none" stroke="#fff" strokeWidth="1.400"><path d="M1 7 H4 L9 2 V18 L4 13 H1 Z M12.500 7 Q14.500 10 12.500 13 M16 5 Q19 10 16 15 M19.500 3 Q24 10 19.500 17" /></svg></Slot>
          <TrayText $w={64}><Text $s={18} $lh={26} $ls={-0.1}>ENG</Text><Text $s={18} $lh={26}>IN</Text></TrayText>
          <TrayText $w={94}><Text $s={18} $lh={26} $ls={0.25}>10:00 PM</Text><Text $s={18} $lh={26} $ls={0.4}>9/15/2025</Text></TrayText>
          <Notice>
            <svg width="24" height="24" viewBox="0 0 24 24"><path d="M0 0 H24 V19 H13 L7 24 V19 H0 Z" fill="#fff" /><path d="M4 5 H20 M4 9.500 H20 M4 14 H13" stroke="#1e3130" strokeWidth="1.500" /></svg>
            <Count>21</Count>
          </Notice>
          <DesktopEdge />
        </Tray>
      </Taskbar>
    </Screen>
  );
}
